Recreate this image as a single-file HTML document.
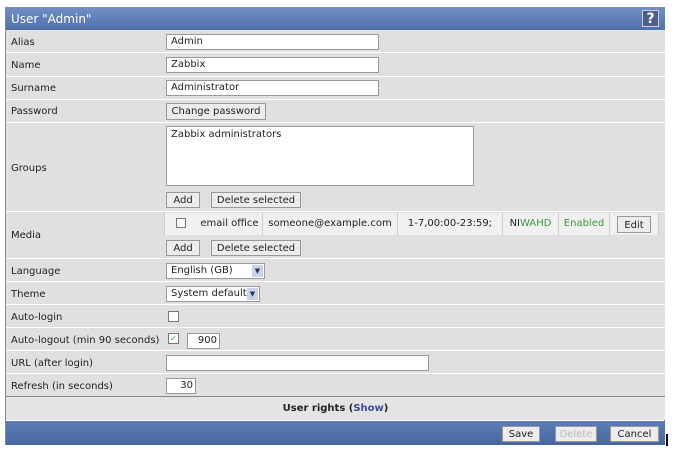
<!DOCTYPE html>
<html><head><style>
body{margin:0;width:673px;height:454px;background:#fff;font-family:"DejaVu Sans","Liberation Sans",sans-serif;font-size:10px;color:#222;position:relative;overflow:hidden}
.a{position:absolute}
.panel{left:5px;top:7px;width:660px;height:438px;border:1px solid #8a8a8a;box-sizing:border-box}
.hdr{left:6px;top:8px;width:659px;height:22px;background:linear-gradient(#6f8fc4,#4e6fa8);color:#fff;font-size:12px;line-height:22px;text-indent:5px}
.row{left:6px;width:659px;background:#e0e0e0;border-bottom:1px solid #fff;box-sizing:border-box}
.lbl{left:11px;font-size:10px}
.inp{background:#fff;border:1px solid #999;box-sizing:border-box;height:16px;font-size:10px;line-height:14px;padding-left:4px}
.btn{background:#ececec;border:1px solid #999;box-sizing:border-box;height:16px;font-size:10px;line-height:15px;text-align:center}
.cell{top:213px;height:22px;line-height:22px;border-right:1px solid #ccc;background:#f0f0f0;font-size:10px;text-align:center;white-space:nowrap}
.arr{position:absolute;right:1px;top:1px;width:11px;height:12px;background:#c8d4ec;color:#335;font-size:7px;line-height:12px;text-align:center}
</style></head><body>
<div class="a panel"></div>
<div class="a hdr">User "Admin"</div>
<div class="a" style="left:642px;top:10px;width:17px;height:17px;background:#4a5f8c;border:1px solid #c8d0e0;color:#fff;font-weight:bold;font-size:14px;line-height:17px;text-align:center;box-sizing:border-box">?</div>

<div class="a row" style="top:30px;height:23px"></div>
<div class="a row" style="top:53px;height:24px"></div>
<div class="a row" style="top:77px;height:23px"></div>
<div class="a row" style="top:100px;height:23px"></div>
<div class="a row" style="top:123px;height:89px"></div>
<div class="a row" style="top:212px;height:47px"></div>
<div class="a row" style="top:259px;height:23px"></div>
<div class="a row" style="top:282px;height:23px"></div>
<div class="a row" style="top:305px;height:23px"></div>
<div class="a row" style="top:328px;height:23px"></div>
<div class="a row" style="top:351px;height:23px"></div>
<div class="a row" style="top:374px;height:23px;border-bottom:1px solid #888"></div>
<div class="a" style="left:6px;top:397px;width:659px;height:23px;background:#e4e4e4;text-align:center;line-height:24px;font-weight:bold;font-size:10px">User rights (<span style="color:#3a4a9a;font-weight:bold">Show</span>)</div>
<div class="a" style="left:6px;top:421px;width:659px;height:24px;background:linear-gradient(#5d7db6,#4867a0)"></div>
<div class="a btn" style="left:502px;top:426px;width:38px;height:16px">Save</div>
<div class="a btn" style="left:555px;top:426px;width:42px;height:16px;color:#bbb">Delete</div>
<div class="a btn" style="left:610px;top:426px;width:49px;height:16px">Cancel</div>
<div class="a" style="left:666px;top:434px;width:2px;height:12px;background:#000"></div>

<div class="a lbl" style="top:37px">Alias</div>
<div class="a lbl" style="top:60px">Name</div>
<div class="a lbl" style="top:83px">Surname</div>
<div class="a lbl" style="top:106px">Password</div>
<div class="a lbl" style="top:163px">Groups</div>
<div class="a lbl" style="top:230px">Media</div>
<div class="a lbl" style="top:266px">Language</div>
<div class="a lbl" style="top:289px">Theme</div>
<div class="a lbl" style="top:312px">Auto-login</div>
<div class="a lbl" style="top:335px">Auto-logout (min 90 seconds)</div>
<div class="a lbl" style="top:358px">URL (after login)</div>
<div class="a lbl" style="top:381px">Refresh (in seconds)</div>

<div class="a inp" style="left:166px;top:34px;width:213px">Admin</div>
<div class="a inp" style="left:166px;top:57px;width:213px">Zabbix</div>
<div class="a inp" style="left:166px;top:80px;width:213px">Administrator</div>
<div class="a btn" style="left:166px;top:103px;width:100px;height:17px;line-height:16px">Change password</div>
<div class="a" style="left:166px;top:126px;width:308px;height:60px;background:#fff;border:1px solid #999;box-sizing:border-box;padding:2px 4px">Zabbix administrators</div>
<div class="a btn" style="left:166px;top:192px;width:34px">Add</div>
<div class="a btn" style="left:211px;top:192px;width:90px">Delete selected</div>

<div class="a cell" style="left:164px;width:32px;border-left:1px solid #ccc"><span style="display:inline-block;width:8px;height:8px;border:1px solid #777;background:#fff;vertical-align:middle"></span></div>
<div class="a cell" style="left:197px;width:65px">email office</div>
<div class="a cell" style="left:263px;width:134px">someone@example.com</div>
<div class="a cell" style="left:398px;width:104px">1-7,00:00-23:59;</div>
<div class="a cell" style="left:503px;width:55px">NI<span style="color:#3a9a3a">WAHD</span></div>
<div class="a cell" style="left:559px;width:50px;color:#3a9a3a">Enabled</div>
<div class="a cell" style="left:610px;width:48px"></div>
<div class="a btn" style="left:617px;top:216px;width:34px;height:17px;line-height:17px">Edit</div>
<div class="a btn" style="left:166px;top:240px;width:34px">Add</div>
<div class="a btn" style="left:211px;top:240px;width:90px">Delete selected</div>

<div class="a inp" style="left:166px;top:263px;width:99px">English (GB)<span class="arr">▼</span></div>
<div class="a inp" style="left:166px;top:286px;width:94px">System default<span class="arr">▼</span></div>
<div class="a" style="left:168px;top:311px;width:9px;height:9px;border:1px solid #777;background:#fff"></div>
<div class="a" style="left:168px;top:333px;width:9px;height:9px;border:1px solid #777;background:#fff;color:#3a9a3a;font-size:8px;line-height:9px;text-align:center">✓</div>
<div class="a inp" style="left:187px;top:333px;width:33px;text-align:right;padding-right:2px">900</div>
<div class="a inp" style="left:166px;top:355px;width:263px"></div>
<div class="a inp" style="left:166px;top:378px;width:30px;text-align:right;padding-right:2px">30</div>
</body></html>
